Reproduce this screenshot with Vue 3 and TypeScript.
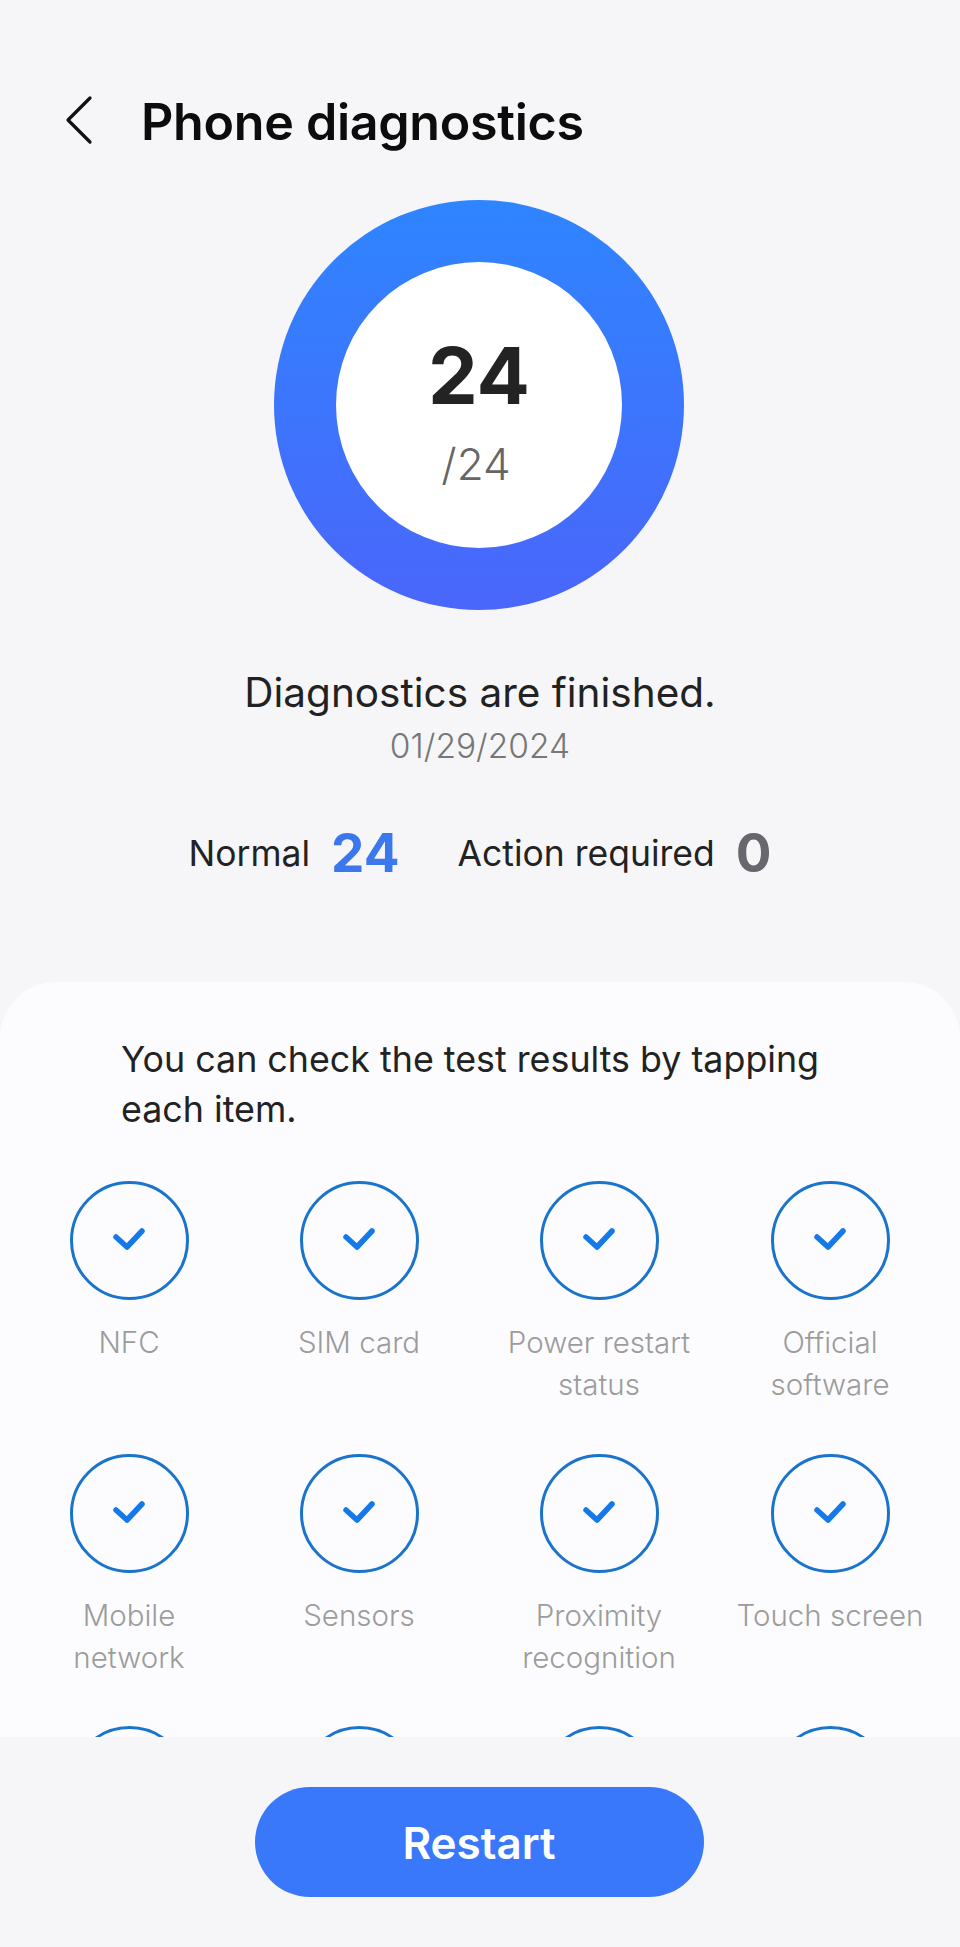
<script setup lang="ts">
interface TestItem {
  label: string
}

const items: TestItem[] = [
  { label: 'NFC' },
  { label: 'SIM card' },
  { label: 'Power restart\nstatus' },
  { label: 'Official\nsoftware' },
  { label: 'Mobile\nnetwork' },
  { label: 'Sensors' },
  { label: 'Proximity\nrecognition' },
  { label: 'Touch screen' },
  { label: '' },
  { label: '' },
  { label: '' },
  { label: '' },
]
</script>

<template>
  <div class="page">
    <header class="top-bar">
      <svg class="back" width="30" height="52" viewBox="0 0 30 52" fill="none">
        <path d="M26 3 L4 25 L26 47" stroke="#111" stroke-width="3.2" stroke-linecap="round" stroke-linejoin="round" />
      </svg>
      <h1 class="title">Phone diagnostics</h1>
    </header>

    <section class="summary">
      <div class="ring">
        <div class="ring-inner">
          <span class="score">24</span>
          <span class="total">/24</span>
        </div>
      </div>
      <p class="status">Diagnostics are finished.</p>
      <p class="date">01/29/2024</p>
      <div class="stats">
        <span class="stat-label">Normal</span>
        <span class="stat-num blue">24</span>
        <span class="stat-label action">Action required</span>
        <span class="stat-num grey">0</span>
      </div>
    </section>

    <main class="card">
      <p class="hint">You can check the test results by tapping each item.</p>
      <div class="grid">
        <div v-for="(item, i) in items" :key="i" class="item">
          <svg width="119" height="119" viewBox="0 0 119 119" fill="none">
            <circle cx="59.5" cy="59.5" r="58" stroke="#1b74cc" stroke-width="3" />
            <path d="M46 56 L57 66 L72 50" stroke="#1579ea" stroke-width="5.5" stroke-linecap="round" stroke-linejoin="round" />
          </svg>
          <span class="label">{{ item.label }}</span>
        </div>
      </div>
    </main>

    <footer class="footer">
      <button class="restart">Restart</button>
    </footer>
  </div>
</template>

<style scoped>
.page {
  display: flex;
  flex-direction: column;
  height: 1947px;
  overflow: hidden;
  background: #f6f6f8;
  font-family: Inter, "Liberation Sans", sans-serif;
  color: #222;
}

.top-bar {
  display: flex;
  align-items: center;
  height: 80px;
  margin-top: 81px;
  padding-left: 64px;
}
.back {
  flex: none;
}
.title {
  margin: 0 0 0 47px;
  font-size: 50.2px;
  font-weight: 600;
  color: #0c0c0c;
  letter-spacing: -0.3px;
}

.summary {
  display: flex;
  flex-direction: column;
  align-items: center;
  height: 821px;
}
.ring {
  display: flex;
  align-items: center;
  justify-content: center;
  width: 410px;
  height: 410px;
  margin-top: 39px;
  margin-right: 2px;
  border-radius: 50%;
  background: linear-gradient(180deg, #2f85ff 0%, #4a66fb 100%);
}
.ring-inner {
  display: flex;
  flex-direction: column;
  align-items: center;
  width: 286px;
  height: 286px;
  border-radius: 50%;
  background: #fff;
}
.score {
  margin-top: 63px;
  font-size: 79px;
  line-height: 100px;
  font-weight: 700;
  color: #232323;
}
.total {
  margin-top: 12px;
  margin-right: 6px;
  font-size: 44px;
  line-height: 54px;
  font-weight: 300;
  color: #666;
}
.status {
  margin: 55px 0 0;
  font-size: 40.5px;
  line-height: 56px;
  color: #222;
}
.date {
  margin: 5px 0 0;
  font-size: 33.5px;
  line-height: 40px;
  font-weight: 300;
  color: #777;
}
.stats {
  display: flex;
  align-items: center;
  height: 64px;
  margin-top: 55px;
}
.stat-label {
  font-size: 35.5px;
  color: #222;
}
.action {
  margin-left: 58px;
}
.stat-num {
  margin-left: 21px;
  font-size: 53px;
  font-weight: 700;
}
.blue {
  color: #3b78ee;
}
.grey {
  color: #67676e;
}

.card {
  flex: 1;
  min-height: 0;
  overflow: hidden;
  padding-top: 52px;
  border-radius: 56px 56px 0 0;
  background: #fcfcfe;
}
.hint {
  margin: 0;
  padding: 0 100px 0 121px;
  font-size: 35.8px;
  line-height: 50px;
  color: #222;
}
.grid {
  display: grid;
  grid-template-columns: 230px 230px 250px 212px;
  grid-auto-rows: 272.5px;
  margin-top: 47px;
  padding-left: 14px;
}
.item {
  display: flex;
  flex-direction: column;
  align-items: center;
}
.label {
  margin-top: 21px;
  font-size: 29.5px;
  line-height: 42px;
  font-weight: 300;
  text-align: center;
  white-space: pre-line;
  color: #9c9c9c;
}

.footer {
  display: flex;
  justify-content: center;
  flex: none;
  height: 210px;
  padding-top: 50px;
  padding-right: 2px;
  box-sizing: border-box;
  background: #f6f6f8;
}
.restart {
  width: 449px;
  height: 110px;
  padding-top: 2px;
  border: none;
  border-radius: 55px;
  background: #3a78fb;
  color: #fff;
  font-family: inherit;
  font-size: 44px;
  font-weight: 600;
}
</style>
